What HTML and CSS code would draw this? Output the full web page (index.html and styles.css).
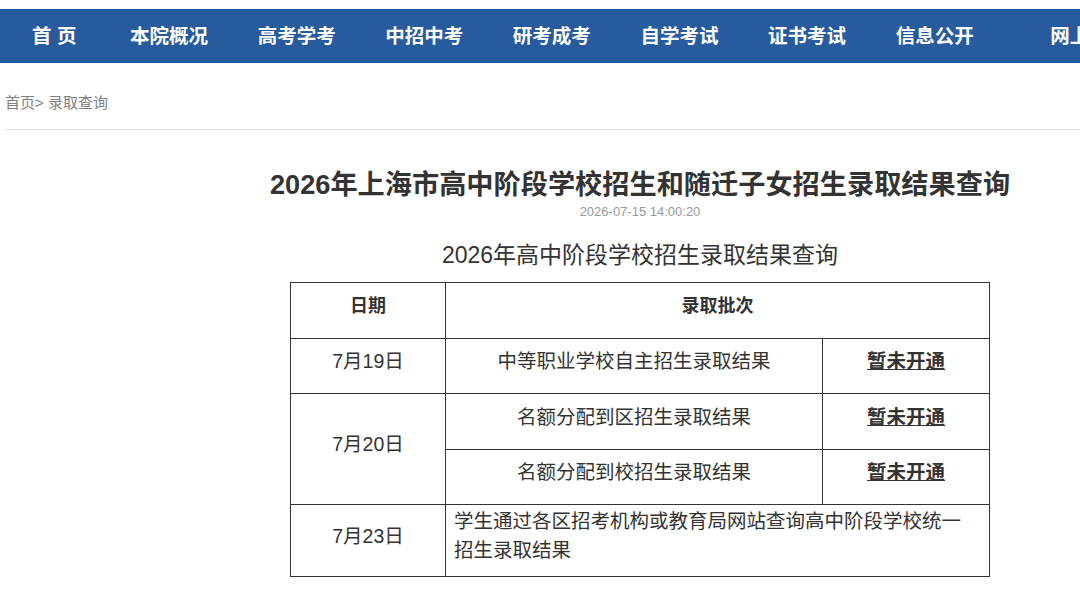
FILE: index.html
```html
<!DOCTYPE html>
<html lang="zh-CN">
<head>
    <meta charset="UTF-8">
    <meta name="viewport" content="width=device-width, initial-scale=1.0">
    <title>录取查询</title>
    <link rel="stylesheet" href="styles.css">
</head>
<body>

<div class="nav">
    <ul>
        <li class="home">首&nbsp;页</li>
        <li>本院概况</li>
        <li>高考学考</li>
        <li>中招中考</li>
        <li>研考成考</li>
        <li>自学考试</li>
        <li>证书考试</li>
        <li>信息公开</li>
        <li class="last">网上服务</li>
    </ul>
</div>

<div class="crumb">首页&gt; 录取查询</div>

<div class="page">
    <div class="side"></div>
    <div class="main">
        <h1 class="title">2026年上海市高中阶段学校招生和随迁子女招生录取结果查询</h1>
        <div class="time">2026-07-15 14:00:20</div>
        <h2 class="subtitle">2026年高中阶段学校招生录取结果查询</h2>

        <table class="result">
            <colgroup>
                <col style="width:155px">
                <col style="width:377px">
                <col style="width:167px">
            </colgroup>
            <tr class="head">
                <th>日期</th>
                <th colspan="2">录取批次</th>
            </tr>
            <tr>
                <td>7月19日</td>
                <td>中等职业学校自主招生录取结果</td>
                <td><a class="open">暂未开通</a></td>
            </tr>
            <tr class="tall">
                <td rowspan="2">7月20日</td>
                <td>名额分配到区招生录取结果</td>
                <td><a class="open">暂未开通</a></td>
            </tr>
            <tr>
                <td>名额分配到校招生录取结果</td>
                <td><a class="open">暂未开通</a></td>
            </tr>
            <tr class="note">
                <td>7月23日</td>
                <td colspan="2" class="left">学生通过各区招考机构或教育局网站查询高中阶段学校统一<br>招生录取结果</td>
            </tr>
        </table>
    </div>
</div>

</body>
</html>
```

FILE: styles.css
```css
body {
    margin: 0;
    padding: 0;
    font-family: "Liberation Sans", "Noto Sans CJK SC", sans-serif;
    color: #333;
    background-color: #fff;
    overflow: hidden;
}

/* top menu bar */
.nav {
    margin-top: 9px;
    height: 54px;
    background-color: #285a9e;
    overflow: hidden;
    white-space: nowrap;
}

.nav ul {
    list-style: none;
    margin: 0;
    padding: 0 0 0 32px;
    display: flex;
    gap: 49.6px;
}

.nav li {
    flex: none;
    line-height: 54px;
    font-size: 19.5px;
    font-weight: bold;
    color: #fff;
}

.nav li.home {
    margin-right: 4px;
}

.nav li.last {
    margin-left: 27px;
}

.crumb {
    margin-left: 5px;
    padding: 30px 0 16px;
    line-height: 20px;
    font-size: 15px;
    color: #808080;
    border-bottom: 1px solid #ddd;
}

/* content column sits right of an empty side column */
.page {
    display: flex;
}

.side {
    width: 200px;
    flex: none;
}

.main {
    flex: 1;
    text-align: center;
}

.title {
    margin: 37px -40px 0;
    font-size: 27.2px;
    line-height: 36px;
    font-weight: bold;
    color: #333;
    white-space: nowrap;
}

.time {
    font-size: 13px;
    line-height: 18px;
    color: #999;
}

.subtitle {
    margin: 18px 0 11px;
    font-size: 23px;
    line-height: 32px;
    font-weight: normal;
    color: #333;
}

.result {
    margin: 0 auto;
    width: 699px;
    border-collapse: collapse;
    table-layout: fixed;
    font-size: 19.5px;
    line-height: 29px;
    color: #333;
}

.result tr {
    height: 55px;
}

.result tr.head,
.result tr.tall {
    height: 56px;
}

.result tr.note {
    height: 70px;
}

.result th, .result td {
    border: 1px solid #333;
    padding: 2px 8px 11px;
    vertical-align: middle;
    text-align: center;
}

.result th {
    font-size: 18px;
    font-weight: bold;
}

.result td.left {
    text-align: left;
}

.open {
    font-weight: bold;
    text-decoration: underline;
    color: #333;
}
```
